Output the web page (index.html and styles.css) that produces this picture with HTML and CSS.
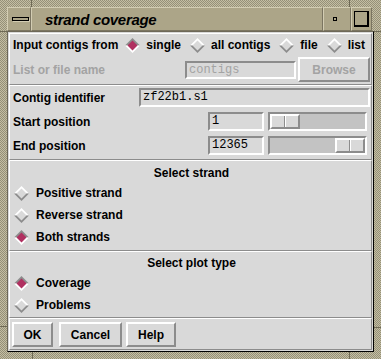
FILE: index.html
```html
<!DOCTYPE html>
<html>
<head>
<meta charset="utf-8">
<title>strand coverage</title>
<link rel="stylesheet" href="styles.css">
</head>
<body>
<div class="window">
  <span class="notch notch-v notch-tl"></span>
  <span class="notch notch-v notch-tr"></span>
  <span class="notch notch-v notch-bl"></span>
  <span class="notch notch-v notch-br"></span>
  <span class="notch notch-h notch-lt"></span>
  <span class="notch notch-h notch-lb"></span>
  <span class="notch notch-h notch-rt"></span>
  <span class="notch notch-h notch-rb"></span>

  <div class="titlebar">
    <div class="tb-btn tb-menu"><span class="menu-bar"></span></div>
    <div class="tb-title">strand coverage</div>
    <div class="tb-btn tb-iconify"><span class="iconify-dot"></span></div>
    <div class="tb-btn tb-max"><span class="max-box"></span></div>
  </div>

  <div class="client">
    <div class="section sec-input">
      <div class="row row-from">
        <span class="label">Input contigs from</span>
        <div class="radio-group">
          <div class="radio on"><svg class="diamond" width="15" height="15" viewBox="0 0 15 15"><polygon class="d-top" points="0,7.5 7.5,0 15,7.5"/><polygon class="d-bot" points="0,7.5 15,7.5 7.5,15"/><polygon class="d-in" points="7.5,2.5 12.5,7.5 7.5,12.5 2.5,7.5"/></svg><span>single</span></div>
          <div class="radio"><svg class="diamond" width="15" height="15" viewBox="0 0 15 15"><polygon class="d-top" points="0,7.5 7.5,0 15,7.5"/><polygon class="d-bot" points="0,7.5 15,7.5 7.5,15"/><polygon class="d-in" points="7.5,2.5 12.5,7.5 7.5,12.5 2.5,7.5"/></svg><span>all contigs</span></div>
          <div class="radio"><svg class="diamond" width="15" height="15" viewBox="0 0 15 15"><polygon class="d-top" points="0,7.5 7.5,0 15,7.5"/><polygon class="d-bot" points="0,7.5 15,7.5 7.5,15"/><polygon class="d-in" points="7.5,2.5 12.5,7.5 7.5,12.5 2.5,7.5"/></svg><span>file</span></div>
          <div class="radio"><svg class="diamond" width="15" height="15" viewBox="0 0 15 15"><polygon class="d-top" points="0,7.5 7.5,0 15,7.5"/><polygon class="d-bot" points="0,7.5 15,7.5 7.5,15"/><polygon class="d-in" points="7.5,2.5 12.5,7.5 7.5,12.5 2.5,7.5"/></svg><span>list</span></div>
        </div>
      </div>
      <div class="row row-name">
        <span class="label disabled">List or file name</span>
        <div class="entry entry-name disabled">contigs</div>
        <div class="button button-browse disabled">Browse</div>
      </div>
    </div>

    <div class="section sec-pos">
      <div class="row row-field">
        <span class="label">Contig identifier</span>
        <div class="entry entry-contig">zf22b1.s1</div>
      </div>
      <div class="row row-field">
        <span class="label">Start position</span>
        <div class="entry entry-num">1</div>
        <div class="scale"><div class="slider slider-start"></div></div>
      </div>
      <div class="row row-field">
        <span class="label">End position</span>
        <div class="entry entry-num">12365</div>
        <div class="scale scale-end"><div class="slider"></div></div>
      </div>
    </div>

    <div class="section sec-strand">
      <div class="heading">Select strand</div>
      <div class="radio radio-line"><svg class="diamond" width="15" height="15" viewBox="0 0 15 15"><polygon class="d-top" points="0,7.5 7.5,0 15,7.5"/><polygon class="d-bot" points="0,7.5 15,7.5 7.5,15"/><polygon class="d-in" points="7.5,2.5 12.5,7.5 7.5,12.5 2.5,7.5"/></svg><span>Positive strand</span></div>
      <div class="radio radio-line"><svg class="diamond" width="15" height="15" viewBox="0 0 15 15"><polygon class="d-top" points="0,7.5 7.5,0 15,7.5"/><polygon class="d-bot" points="0,7.5 15,7.5 7.5,15"/><polygon class="d-in" points="7.5,2.5 12.5,7.5 7.5,12.5 2.5,7.5"/></svg><span>Reverse strand</span></div>
      <div class="radio radio-line on"><svg class="diamond" width="15" height="15" viewBox="0 0 15 15"><polygon class="d-top" points="0,7.5 7.5,0 15,7.5"/><polygon class="d-bot" points="0,7.5 15,7.5 7.5,15"/><polygon class="d-in" points="7.5,2.5 12.5,7.5 7.5,12.5 2.5,7.5"/></svg><span>Both strands</span></div>
    </div>

    <div class="section sec-plot">
      <div class="heading">Select plot type</div>
      <div class="radio radio-line on"><svg class="diamond" width="15" height="15" viewBox="0 0 15 15"><polygon class="d-top" points="0,7.5 7.5,0 15,7.5"/><polygon class="d-bot" points="0,7.5 15,7.5 7.5,15"/><polygon class="d-in" points="7.5,2.5 12.5,7.5 7.5,12.5 2.5,7.5"/></svg><span>Coverage</span></div>
      <div class="radio radio-line"><svg class="diamond" width="15" height="15" viewBox="0 0 15 15"><polygon class="d-top" points="0,7.5 7.5,0 15,7.5"/><polygon class="d-bot" points="0,7.5 15,7.5 7.5,15"/><polygon class="d-in" points="7.5,2.5 12.5,7.5 7.5,12.5 2.5,7.5"/></svg><span>Problems</span></div>
    </div>

    <div class="section sec-buttons">
      <div class="button button-ok">OK</div>
      <div class="button button-cancel">Cancel</div>
      <div class="button button-help">Help</div>
    </div>
  </div>
</div>
</body>
</html>
```

FILE: styles.css
```css
html, body {
  margin: 0;
  padding: 0;
  background: #000;
}

.window {
  position: relative;
  width: 381px;
  height: 359px;
  box-sizing: border-box;
  padding: 7px 7px 7px 7px;
  display: flex;
  flex-direction: column;
  background: repeating-conic-gradient(#c4bea3 0 25%, #959078 0 50%) 0 0 / 2px 2px;
  font-family: "Liberation Sans", Arial, sans-serif;
}

/* resize-handle notches of the window frame */
.notch {
  position: absolute;
  background: #6f6a55;
}
.notch-v { width: 1px; height: 7px; }
.notch-h { width: 7px; height: 1px; }
.notch-tl { left: 31px; top: 0; }
.notch-tr { left: 349px; top: 0; }
.notch-bl { left: 32px; bottom: 0; }
.notch-br { left: 349px; bottom: 0; }
.notch-lt { left: 0; top: 31px; }
.notch-lb { left: 0; top: 326px; }
.notch-rt { right: 0; top: 31px; }
.notch-rb { right: 0; top: 327px; }

/* title bar */
.titlebar {
  height: 24px;
  margin-right: 2px;
  display: flex;
  background: #aca588;
  flex: none;
}
.tb-btn,
.tb-title {
  box-sizing: border-box;
  border-top: 1px solid #d3cdb3;
  border-left: 1px solid #d3cdb3;
  border-bottom: 1px solid #7b7561;
  border-right: 1px solid #7b7561;
  display: flex;
  align-items: center;
  justify-content: center;
}
.tb-menu { width: 24px; }
.tb-iconify { width: 28px; }
.tb-max { width: 21px; }
.tb-title {
  flex: 1;
  justify-content: flex-start;
  padding-left: 13px;
  font-style: italic;
  font-weight: bold;
  font-size: 15px;
  letter-spacing: -0.3px;
  color: #000;
}
.menu-bar {
  width: 15px;
  height: 2px;
  margin-left: 3px;
  border: 1px solid #000;
  background: #aca588;
  box-shadow: 1px 1px 0 #d3cdb3;
}
.iconify-dot {
  width: 2px;
  height: 2px;
  margin-right: 4px;
  border: 1px solid #000;
  background: #aca588;
}
.max-box {
  width: 12px;
  height: 13px;
  border: 1px solid #000;
  border-right-width: 2px;
  border-bottom-width: 2px;
  background: #aca588;
}

/* client area */
.client {
  flex: 1;
  display: flex;
  flex-direction: column;
  background: #d9d9d9;
  border-top: 1px solid #6d6858;
  border-left: 1px solid #6d6858;
  border-right: 1px solid #000;
  border-bottom: 1px solid #000;
  padding: 1px 1px 1px 1px;
  color: #000;
  font-size: 12px;
  font-weight: bold;
}

.section {
  box-sizing: border-box;
  border-top: 1px solid #fff;
  border-left: 1px solid #fff;
  border-bottom: 1px solid #8c8c8c;
  border-right: 1px solid #8c8c8c;
  padding: 0 1px 0 3px;
  flex: none;
}
.sec-input { height: 52px; padding-top: 1px; }
.sec-pos { height: 75px; padding-top: 2px; }
.sec-strand { height: 91px; padding-top: 3px; padding-left: 4px; }
.sec-plot { height: 67px; padding-top: 2px; padding-left: 4px; }
.sec-buttons {
  height: 32px;
  padding: 3px 0 0 2px;
  display: flex;
  align-items: flex-start;
}

.row {
  display: flex;
  align-items: center;
}
.row-from { height: 20px; }
.row-name { height: 25px; margin-top: 2px; }
.row-field { height: 19px; margin-bottom: 5px; }

.label { flex: 1; white-space: nowrap; }
.row-from .label { flex: none; }
.disabled { color: #a3a3a3; }

.radio-group {
  display: flex;
  align-items: center;
  margin-left: 7px;
  gap: 9px;
}
.radio {
  display: flex;
  align-items: center;
  gap: 6px;
  white-space: nowrap;
}
.radio-line {
  height: 22px;
  gap: 7px;
}
.diamond { display: block; flex: none; }
.d-top { fill: #fff; }
.d-bot { fill: #8c8c8c; }
.d-in { fill: #d9d9d9; }
.radio.on .d-top { fill: #8c8c8c; }
.radio.on .d-bot { fill: #fff; }
.radio.on .d-in { fill: #b03060; }

.heading {
  height: 18px;
  line-height: 18px;
  text-align: center;
  margin-left: -1px;
}

/* entries */
.entry {
  box-sizing: border-box;
  height: 19px;
  border-top: 2px solid #8c8c8c;
  border-left: 2px solid #8c8c8c;
  border-bottom: 2px solid #fff;
  border-right: 2px solid #fff;
  padding-left: 2px;
  font-family: "Liberation Mono", "Courier New", monospace;
  font-weight: normal;
  font-size: 12px;
  line-height: 15px;
  white-space: nowrap;
  overflow: hidden;
  flex: none;
}
.entry-name { width: 111px; height: 18px; line-height: 14px; margin-right: 2px; }
.entry-contig { width: 231px; }
.entry-num { width: 56px; margin-right: 4px; }

/* scale */
.scale {
  box-sizing: border-box;
  width: 99px;
  height: 19px;
  margin-right: 3px;
  border-top: 2px solid #8c8c8c;
  border-left: 2px solid #8c8c8c;
  border-bottom: 2px solid #fff;
  border-right: 2px solid #fff;
  background: #c3c3c3;
  display: flex;
  flex: none;
}
.scale-end { justify-content: flex-end; }
.slider {
  box-sizing: border-box;
  width: 30px;
  height: 15px;
  border-top: 2px solid #fff;
  border-left: 2px solid #fff;
  border-bottom: 2px solid #8c8c8c;
  border-right: 2px solid #8c8c8c;
  background: linear-gradient(to right, transparent 12px, #8c8c8c 12px, #8c8c8c 13px, #fff 13px, #fff 14px, transparent 14px) #d9d9d9;
}

/* buttons */
.button {
  box-sizing: border-box;
  height: 25px;
  border-top: 2px solid #fff;
  border-left: 2px solid #fff;
  border-bottom: 2px solid #8c8c8c;
  border-right: 2px solid #8c8c8c;
  display: flex;
  align-items: center;
  justify-content: center;
  flex: none;
}
.button-browse { width: 72px; }
.button-ok { width: 41px; margin-right: 6px; }
.button-cancel { width: 63px; margin-right: 4px; }
.button-help { width: 50px; }
```
